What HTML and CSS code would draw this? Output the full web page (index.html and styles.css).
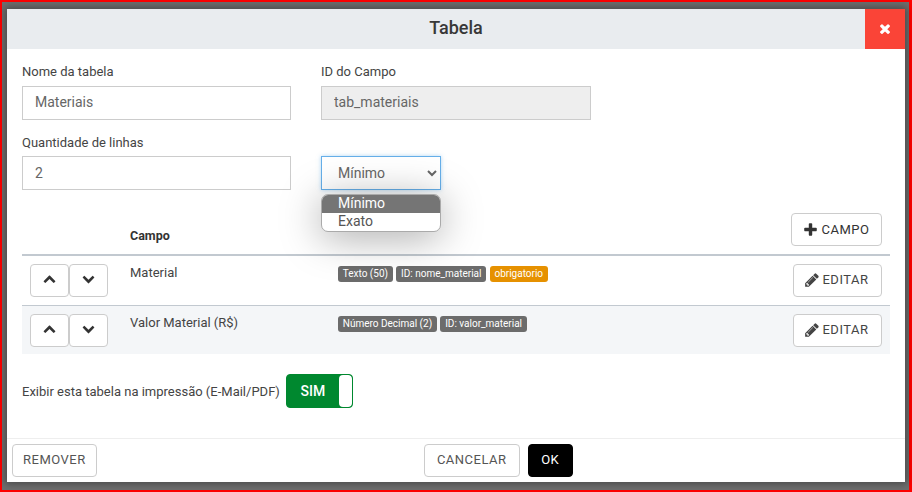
FILE: index.html
```html
<!DOCTYPE html>
<html lang="en">
<head>
    <meta charset="UTF-8">
    <meta name="viewport" content="width=device-width, initial-scale=1.0">
    <title>Tabela</title>
    <link rel="stylesheet" href="styles.css">
</head>
<body>
    <div class="backdrop">
        <div class="modal">
            <div class="modal-header">
                <h1>Tabela</h1>
                <button class="close" type="button">
                    <svg class="icon" viewBox="0 0 1408 1792" width="12" height="15"><path d="M1298 1214q0 40-28 68l-136 136q-28 28-68 28t-68-28l-294-294-294 294q-28 28-68 28t-68-28l-136-136q-28-28-28-68t28-68l294-294-294-294q-28-28-28-68t28-68l136-136q28-28 68-28t68 28l294 294 294-294q28-28 68-28t68 28l136 136q28 28 28 68t-28 68l-294 294 294 294q28 28 28 68z"/></svg>
                </button>
            </div>

            <div class="modal-body">
                <div class="form-row">
                    <div class="field">
                        <label>Nome da tabela</label>
                        <input type="text" value="Materiais">
                    </div>
                    <div class="field">
                        <label>ID do Campo</label>
                        <input type="text" value="tab_materiais" disabled>
                    </div>
                </div>
                <div class="form-row second">
                    <div class="field">
                        <label>Quantidade de linhas</label>
                        <input type="text" value="2">
                    </div>
                    <div class="field field-select">
                        <select>
                            <option>Mínimo</option>
                            <option>Exato</option>
                        </select>
                        <ul class="select-menu">
                            <li class="selected">Mínimo</li>
                            <li>Exato</li>
                        </ul>
                    </div>
                </div>

                <div class="fields">
                    <div class="fields-head">
                        <div class="col-name">Campo</div>
                        <button class="btn btn-campo" type="button">
                            <svg class="icon" viewBox="0 0 1408 1792" width="13" height="16"><path d="M1408 736v192q0 40-28 68t-68 28h-416v416q0 40-28 68t-68 28h-192q-40 0-68-28t-28-68v-416h-416q-40 0-68-28t-28-68v-192q0-40 28-68t68-28h416v-416q0-40 28-68t68-28h192q40 0 68 28t28 68v416h416q40 0 68 28t28 68z"/></svg>
                            CAMPO
                        </button>
                    </div>

                    <div class="field-row">
                        <div class="move">
                            <button class="btn" type="button"><svg class="icon" viewBox="0 0 1792 1792" width="13" height="13"><path d="M1683 1331l-166 165q-19 19-45 19t-45-19l-531-531-531 531q-19 19-45 19t-45-19l-166-165q-19-19-19-45.5t19-45.5l742-741q19-19 45-19t45 19l742 741q19 19 19 45.5t-19 45.5z"/></svg></button>
                            <button class="btn" type="button"><svg class="icon" viewBox="0 0 1792 1792" width="13" height="13"><path d="M1683 808l-742 741q-19 19-45 19t-45-19l-742-741q-19-19-19-45.5t19-45.5l166-165q19-19 45-19t45 19l531 531 531-531q19-19 45-19t45 19l166 165q19 19 19 45.5t-19 45.5z"/></svg></button>
                        </div>
                        <div class="col-name">Material</div>
                        <div class="badges">
                            <span class="badge">Texto (50)</span>
                            <span class="badge">ID: nome_material</span>
                            <span class="badge badge-warn">obrigatorio</span>
                        </div>
                        <button class="btn btn-edit" type="button">
                            <svg class="icon" viewBox="0 0 1792 1792" width="16" height="16"><path d="M491 1536l91-91-235-235-91 91v107h128v128h107zm523-928q0-22-22-22-10 0-17 7l-542 542q-7 7-7 17 0 22 22 22 10 0 17-7l542-542q7-7 7-17zm-54-192l416 416-832 832h-416v-416zm683 96q0 53-37 90l-166 166-416-416 166-165q36-38 90-38 53 0 91 38l235 234q37 39 37 91z"/></svg>
                            EDITAR
                        </button>
                    </div>

                    <div class="field-row striped">
                        <div class="move">
                            <button class="btn" type="button"><svg class="icon" viewBox="0 0 1792 1792" width="13" height="13"><path d="M1683 1331l-166 165q-19 19-45 19t-45-19l-531-531-531 531q-19 19-45 19t-45-19l-166-165q-19-19-19-45.5t19-45.5l742-741q19-19 45-19t45 19l742 741q19 19 19 45.5t-19 45.5z"/></svg></button>
                            <button class="btn" type="button"><svg class="icon" viewBox="0 0 1792 1792" width="13" height="13"><path d="M1683 808l-742 741q-19 19-45 19t-45-19l-742-741q-19-19-19-45.5t19-45.5l166-165q19-19 45-19t45 19l531 531 531-531q19-19 45-19t45 19l166 165q19 19 19 45.5t-19 45.5z"/></svg></button>
                        </div>
                        <div class="col-name">Valor Material (R$)</div>
                        <div class="badges">
                            <span class="badge">Número Decimal (2)</span>
                            <span class="badge">ID: valor_material</span>
                        </div>
                        <button class="btn btn-edit" type="button">
                            <svg class="icon" viewBox="0 0 1792 1792" width="16" height="16"><path d="M491 1536l91-91-235-235-91 91v107h128v128h107zm523-928q0-22-22-22-10 0-17 7l-542 542q-7 7-7 17 0 22 22 22 10 0 17-7l542-542q7-7 7-17zm-54-192l416 416-832 832h-416v-416zm683 96q0 53-37 90l-166 166-416-416 166-165q36-38 90-38 53 0 91 38l235 234q37 39 37 91z"/></svg>
                            EDITAR
                        </button>
                    </div>
                </div>

                <div class="print-row">
                    <span>Exibir esta tabela na impressão (E-Mail/PDF)</span>
                    <div class="toggle">
                        <span class="toggle-label">SIM</span>
                        <span class="toggle-knob"></span>
                    </div>
                </div>
            </div>

            <div class="modal-footer">
                <button class="btn btn-foot" type="button">REMOVER</button>
                <div class="foot-center">
                    <button class="btn btn-foot btn-cancel" type="button">CANCELAR</button>
                    <button class="btn btn-foot btn-ok" type="button">OK</button>
                </div>
            </div>
        </div>
    </div>
</body>
</html>
```

FILE: styles.css
```css
* {
    box-sizing: border-box;
}

html, body {
    margin: 0;
    padding: 0;
    height: 492px;
    overflow: hidden;
}

body {
    font-family: Roboto, "Liberation Sans", sans-serif;
    font-size: 13px;
    color: #444;
}

.backdrop {
    height: 492px;
    border: solid #ff0000;
    border-width: 2px 3px 2px 2px;
    background: #6f6f6f;
    padding: 7px 4px 8px 5px;
}

.modal {
    height: 473px;
    background: white;
    box-shadow: 0 0 8px 2px rgba(0,0,0,0.35);
    display: flex;
    flex-direction: column;
}

.modal-header {
    height: 40px;
    flex: none;
    background: #e9ecef;
    display: flex;
    align-items: center;
    justify-content: center;
    position: relative;
    padding-bottom: 3px;
}

.modal-header h1 {
    margin: 0;
    font-size: 18px;
    font-weight: 500;
    color: #383838;
}

.close {
    position: absolute;
    top: 0;
    right: 0;
    width: 40px;
    height: 40px;
    border: none;
    padding: 0;
    background: #fa4437;
    color: white;
    display: flex;
    align-items: center;
    justify-content: center;
}

.icon {
    fill: currentColor;
    display: block;
    flex: none;
}

.modal-body {
    flex: 1;
    padding: 15px 15px 0;
}

.form-row {
    display: flex;
    gap: 30px;
    margin-bottom: 15px;
}

.field {
    width: 269px;
}

.field + .field {
    width: 270px;
}

label {
    display: block;
    height: 22px;
    line-height: 15px;
    color: #444;
}

.second label {
    height: 21px;
}

input[type="text"] {
    display: block;
    width: 100%;
    height: 34px;
    padding: 0 12px 2px;
    border: 1px solid #ccc;
    background: white;
    font-family: inherit;
    font-size: 14px;
    color: #666;
    outline: none;
}

.second input[type="text"] {
    padding-bottom: 0;
}

input[type="text"]:disabled {
    background: #eee;
}

.field-select {
    position: relative;
    padding-top: 21px;
}

select {
    display: block;
    width: 120px;
    height: 34px;
    padding: 0 0 0 12px;
    border: 1px solid #66afe9;
    border-radius: 0;
    background: white;
    font-family: inherit;
    font-size: 14px;
    color: #666;
    box-shadow: 0 0 4px rgba(102,175,233,0.5);
    outline: none;
}

.select-menu {
    position: absolute;
    top: 59px;
    left: 0;
    z-index: 5;
    width: 120px;
    height: 38px;
    margin: 0;
    padding: 0;
    list-style: none;
    background: white;
    border: 1px solid #aaa;
    border-radius: 7px;
    overflow: hidden;
    font-size: 14px;
    line-height: 17px;
    color: #555;
    box-shadow: 0 5px 40px rgba(0,0,0,0.35);
}

.select-menu li {
    height: 18px;
    padding-left: 16px;
}

.select-menu .selected {
    background: #757575;
    color: white;
}

.btn {
    height: 33px;
    padding: 0;
    border: 1px solid #ccc;
    border-radius: 4px;
    background: white;
    font-family: inherit;
    font-size: 13px;
    letter-spacing: 0.5px;
    color: #333;
    display: flex;
    align-items: center;
    justify-content: center;
}

.fields {
    margin-top: 23px;
}

.fields-head {
    height: 43px;
    display: flex;
    border-bottom: 2px solid #c2c9d0;
    padding-right: 8px;
    justify-content: space-between;
    align-items: flex-start;
    padding-left: 108px;
}

.fields-head .col-name {
    padding-top: 15px;
    font-weight: 700;
    color: #333;
    font-size: 12.5px;
}

.btn-campo {
    width: 91px;
    gap: 5px;
}

.field-row {
    height: 50px;
    display: flex;
    padding: 8px 8px 0;
    border-bottom: 1px solid #c2c9d0;
    color: #444;
}

.field-row.striped {
    height: 48px;
    border-bottom: none;
    background: #f4f6f8;
}

.move {
    display: flex;
    width: 100px;
    flex: none;
}

.move .btn {
    width: 39px;
    padding-bottom: 4px;
}

.field-row .col-name {
    width: 208px;
    flex: none;
    line-height: 16px;
    padding-top: 1px;
}

.badges {
    display: flex;
    gap: 3.5px;
    flex: 1;
    align-items: flex-start;
    padding-top: 2px;
}

.badge {
    height: 16px;
    line-height: 16px;
    padding: 0 4.75px;
    border-radius: 3px;
    background: #6c6c6c;
    color: white;
    font-size: 10px;
    font-weight: 400;
}

.badge-warn {
    background: #e69100;
}

.btn-edit {
    width: 89px;
    flex: none;
    gap: 2px;
    padding: 0 2px 2px 0;
    color: #444;
}

.print-row {
    display: flex;
    align-items: center;
    gap: 6px;
    margin-top: 20px;
    height: 34px;
}

.toggle {
    width: 67px;
    height: 34px;
    border: 1px solid #00882f;
    border-radius: 4px;
    background: #00882f;
    display: flex;
    overflow: hidden;
}

.toggle-label {
    flex: 1;
    line-height: 33px;
    text-align: center;
    color: white;
    font-size: 14px;
    font-weight: 500;
}

.toggle-knob {
    width: 13px;
    background: white;
    border-radius: 4px;
}

.modal-footer {
    flex: none;
    height: 44px;
    border-top: 1px solid #eee;
    padding: 5px 0 0 5px;
    display: flex;
    position: relative;
}

.btn-foot {
    height: 33px;
    padding: 0 10px 2px;
    color: #555;
}

.foot-center {
    display: flex;
    gap: 8px;
    margin-left: 327px;
}

.btn-cancel {
    width: 96px;
}

.btn-ok {
    width: 45px;
    background: black;
    border-color: black;
    color: white;
    font-weight: 400;
}
```
